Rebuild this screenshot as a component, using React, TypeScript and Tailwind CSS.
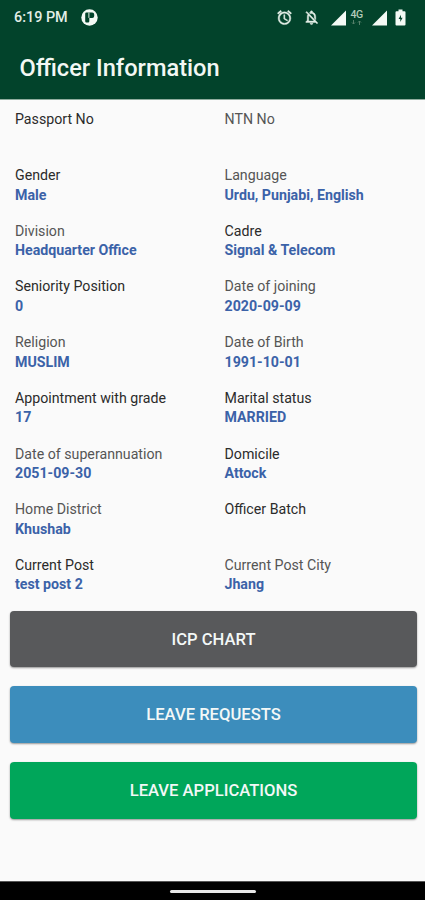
import React from "react";

type Field = { label: string; value?: string; soft?: boolean };

const fields: Field[] = [
  { label: "Passport No" },
  { label: "NTN No", soft: true },
  { label: "Gender", value: "Male" },
  { label: "Language", value: "Urdu, Punjabi, English", soft: true },
  { label: "Division", value: "Headquarter Office", soft: true },
  { label: "Cadre", value: "Signal & Telecom" },
  { label: "Seniority Position", value: "0" },
  { label: "Date of joining", value: "2020-09-09", soft: true },
  { label: "Religion", value: "MUSLIM", soft: true },
  { label: "Date of Birth", value: "1991-10-01", soft: true },
  { label: "Appointment with grade", value: "17" },
  { label: "Marital status", value: "MARRIED" },
  { label: "Date of superannuation", value: "2051-09-30", soft: true },
  { label: "Domicile", value: "Attock" },
  { label: "Home District", value: "Khushab", soft: true },
  { label: "Officer Batch" },
  { label: "Current Post", value: "test post 2" },
  { label: "Current Post City", value: "Jhang", soft: true },
];

function StatusBar() {
  return (
    <div className="flex h-[35px] items-center pl-[14px] pr-[19px] text-[#e4efe7]">
      <span className="w-[54px] whitespace-nowrap pt-px text-[14.4px] font-medium leading-none">6:19 PM</span>
      <svg className="ml-[12.5px]" width="17" height="17" viewBox="0 0 17 17">
        <circle cx="8.5" cy="8.5" r="8.2" fill="#f4faf5" />
        <path
          d="M5.4 3.6h5.8a2 2 0 0 1 2 2v1.3a2 2 0 0 1-2 2H8.3v3.3a1.2 1.2 0 0 1-1.2 1.2H5.4a1.2 1.2 0 0 1-1.2-1.2V4.8a1.2 1.2 0 0 1 1.2-1.2z"
          fill="#02432b"
        />
        <path d="M7.9 3.6v5.3" stroke="#e4efe7" strokeWidth="1" />
      </svg>
      <div className="ml-auto flex items-center">
        <svg width="17" height="17" viewBox="0 0 24 24" fill="currentColor" stroke="currentColor" strokeWidth="0.6">
          <path d="M22 5.72l-4.6-3.86-1.29 1.53 4.6 3.86L22 5.72zM7.88 3.39L6.6 1.86 2 5.71l1.29 1.53 4.59-3.85zM12.5 8H11v6l4.75 2.85.75-1.23-4-2.37V8zM12 4c-4.97 0-9 4.03-9 9s4.02 9 9 9a9 9 0 0 0 0-18zm0 16c-3.87 0-7-3.13-7-7s3.13-7 7-7 7 3.13 7 7-3.13 7-7 7z" />
        </svg>
        <svg className="ml-[10px]" width="17" height="17" viewBox="0 0 24 24" fill="currentColor" stroke="currentColor" strokeWidth="0.6">
          <path d="M20 18.69L7.84 6.14 5.27 3.49 4 4.76l2.8 2.8v.01c-.52.99-.8 2.16-.8 3.42v5l-2 2v1h13.73l2 2L21 19.72l-1-1.03zM8 17v-6c0-.67.1-1.3.3-1.9L15.7 17H8zM12 22c1.11 0 2-.89 2-2h-4c0 1.11.89 2 2 2zM16 11v2.2l2 2V11c0-3.08-1.64-5.64-4.5-6.32V4a1.5 1.5 0 0 0-3 0v.68c-.6.15-1.15.38-1.64.68l1.46 1.5C10.83 6.62 11.4 6.5 12 6.5c2.48 0 4 2.02 4 4.5z" />
        </svg>
        <svg className="ml-[11px]" width="16" height="16" viewBox="0 0 16 16" fill="#f4faf5">
          <path d="M0 15.5L15 0.5V15.5z" />
        </svg>
        <div className="ml-[3px] flex w-[13px] flex-col items-center">
          <span className="text-[10.5px] font-medium leading-[10px] tracking-[-0.5px] text-[#b3cbbb]">4G</span>
          <svg width="11" height="5" viewBox="0 0 11 5" stroke="#56806a" fill="none">
            <path d="M2.5 0v4M1 2.5l1.5 1.5 1.5-1.5M8.5 5V1M7 2.5L8.5 1 10 2.5" />
          </svg>
        </div>
        <svg className="ml-[9px]" width="16" height="16" viewBox="0 0 16 16" fill="#f4faf5">
          <path d="M0 15.5L15 0.5V15.5z" />
        </svg>
        <svg className="ml-[7px]" width="11" height="17" viewBox="0 0 11 17">
          <path d="M3.5 0.5h4v1.7h2a1 1 0 0 1 1 1v12.3a1 1 0 0 1-1 1h-8a1 1 0 0 1-1-1V3.2a1 1 0 0 1 1-1h2z" fill="#f4faf5" />
          <path d="M6 5.8L3.6 10h1.7v3L7.6 8.8H6z" fill="#02432b" />
        </svg>
      </div>
    </div>
  );
}

function ActionButton({ text, color }: { text: string; color: string }) {
  return (
    <button
      className={`flex w-full items-center justify-center rounded-[4px] pt-[3px] text-[16.6px] font-medium text-[#f3f8f7] shadow-[0_1px_2px_rgba(0,0,0,0.4)] ${color}`}
    >
      {text}
    </button>
  );
}

export default function App() {
  return (
    <div className="flex h-[900px] w-[425px] flex-col overflow-hidden bg-[#fafafa] font-['Roboto',sans-serif]">
      <header className="h-[100px] shrink-0 border-b border-[#8fac9e] bg-[#02432b]">
        <StatusBar />
        <h1 className="pl-[19.5px] pt-[17px] text-[23.6px] font-medium leading-[32px] text-[#f3f8f4]">
          Officer Information
        </h1>
      </header>
      <main className="flex flex-1 flex-col">
        <div className="grid grid-cols-[209.5px_1fr] pl-[15px] pt-[10.4px]">
          {fields.map((f) => (
            <div key={f.label} className="h-[55.7px] whitespace-nowrap text-[14.2px] leading-[19.5px]">
              <div className={f.soft ? "text-[#555555]" : "text-[#2b2b2b]"}>{f.label}</div>
              <div className="font-bold text-[#3b62a8]">{f.value}</div>
            </div>
          ))}
        </div>
        <div className="-mt-[0.6px] flex flex-col gap-[18.9px] pl-[10px] pr-[8px]">
          <ActionButton text="ICP CHART" color="h-[56px] bg-[#58595b]" />
          <ActionButton text="LEAVE REQUESTS" color="h-[57px] bg-[#3c8dbc]" />
          <ActionButton text="LEAVE APPLICATIONS" color="h-[57px] bg-[#00a65a]" />
        </div>
      </main>
      <nav className="flex h-[19px] shrink-0 justify-center border-t border-[#555555] bg-black pt-[8px]">
        <div className="h-[3px] w-[86px] rounded-full bg-[#e8e8e8]" />
      </nav>
    </div>
  );
}
